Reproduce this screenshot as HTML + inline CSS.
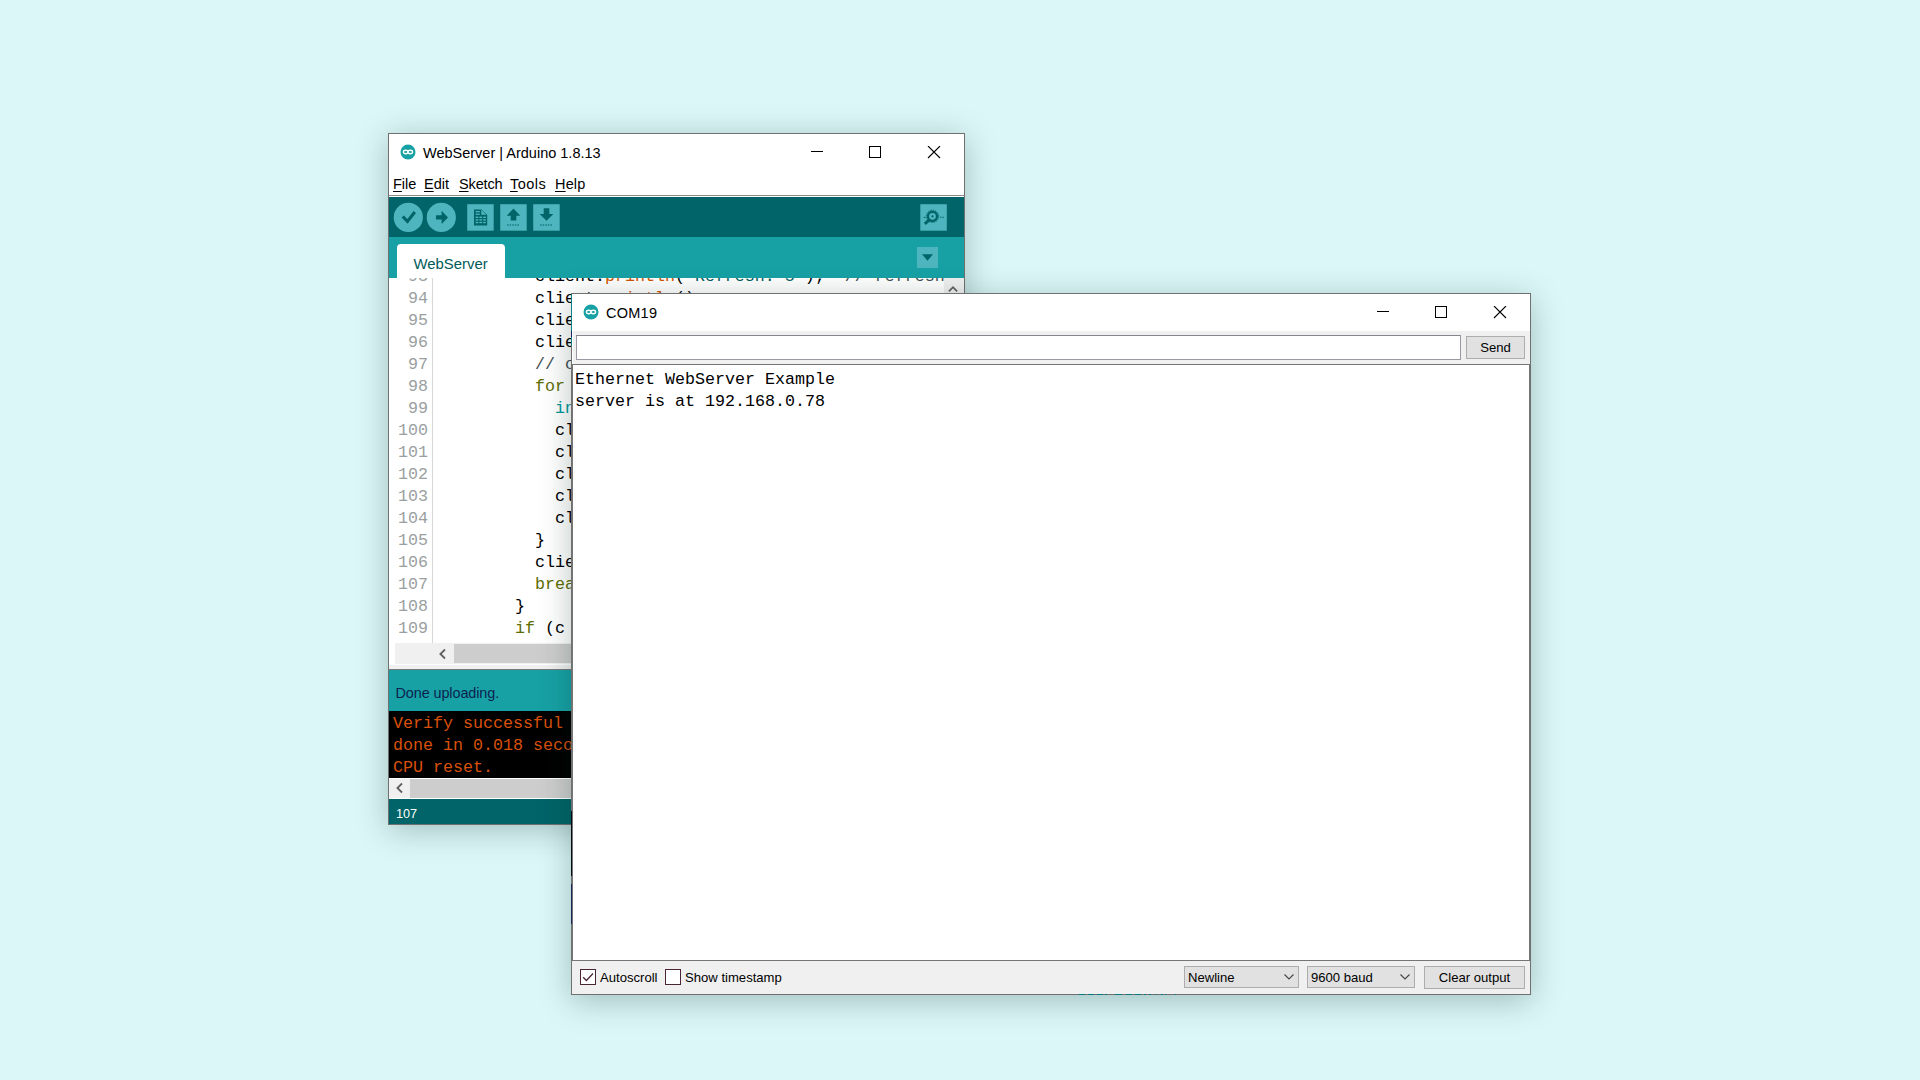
<!DOCTYPE html>
<html lang="en">
<head>
<meta charset="utf-8">
<title>Arduino Serial Monitor</title>
<style>
*{box-sizing:border-box;margin:0;padding:0}
html,body{width:1920px;height:1080px;overflow:hidden;background:#dcf7f8}
body{position:relative;font-family:"Liberation Sans",sans-serif;color:#000}
.abs{position:absolute}
.win{position:absolute;background:#fff;border:1px solid #707070}
/* ---------- Arduino IDE window ---------- */
#ide{left:388px;top:133px;width:577px;height:692px;box-shadow:0 5px 30px rgba(5,40,35,.27)}
#ide .inner{position:absolute;left:0;top:0;width:575px;height:690px;overflow:hidden}
.ttl{position:absolute;font-size:14.5px;line-height:20px;white-space:nowrap;color:#000}
.menu span{position:absolute;top:40px;font-size:14.5px;line-height:20px;white-space:nowrap}
.menu u{text-decoration:underline;text-underline-offset:1.5px;text-decoration-thickness:1px}
.mono{font-family:"Liberation Mono",monospace;font-size:16.67px;line-height:22px;white-space:pre}
.ln{color:#9aa0a0}
.k3{color:#5e6d03}.fn{color:#d35400}.dt{color:#00979c}.st{color:#005c5f}.cm{color:#434f54}
/* ---------- Serial monitor window ---------- */
#com{left:571px;top:293px;width:960px;height:702px;box-shadow:0 6px 30px rgba(5,40,35,.27)}
#com .inner{position:absolute;left:0;top:0;width:958px;height:700px;overflow:hidden}
.ui{font-size:13.1px;line-height:16px;white-space:nowrap;color:#000}
.btn{position:absolute;background:#e1e1e1;border:1px solid #adadad;text-align:center}
</style>
</head>
<body>

<!-- ======================= Arduino IDE ======================= -->
<div class="win" id="ide">
 <div class="inner">
  <!-- title bar -->
  <svg class="abs" style="left:11px;top:10px" width="16" height="16" viewBox="0 0 16 16">
   <circle cx="8" cy="8" r="7.5" fill="#17a1a5"/>
   <path d="M3.4 8a2.3 1.75 0 1 1 4.6 0a2.3 1.75 0 1 0 4.6 0a2.3 1.75 0 1 0 -4.6 0a2.3 1.75 0 1 1 -4.6 0z" fill="none" stroke="#fff" stroke-width="1.3"/>
  </svg>
  <div class="ttl" style="left:34px;top:9px">WebServer | Arduino 1.8.13</div>
  <svg class="abs" style="left:421px;top:12px" width="140" height="14" viewBox="0 0 140 14">
   <path d="M1 5.5h12" stroke="#000" stroke-width="1" fill="none"/>
   <rect x="59.5" y="0.5" width="11" height="11" stroke="#000" stroke-width="1" fill="none"/>
   <path d="M118 0l12 12M130 0l-12 12" stroke="#000" stroke-width="1.1" fill="none"/>
  </svg>
  <!-- menu bar -->
  <div class="menu">
   <span style="left:4px"><u>F</u>ile</span>
   <span style="left:35px"><u>E</u>dit</span>
   <span style="left:70px;letter-spacing:-0.15px"><u>S</u>ketch</span>
   <span style="left:121px;letter-spacing:0.45px"><u>T</u>ools</span>
   <span style="left:166px;letter-spacing:0.15px"><u>H</u>elp</span>
  </div>
  <div class="abs" style="left:0;top:61px;width:575px;height:1px;background:#8a8a8a"></div>
  <!-- toolbar -->
  <div class="abs" id="tb" style="left:0;top:63px;width:575px;height:40px;background:#006468">
   <svg class="abs" style="left:0;top:0" width="575" height="40" viewBox="0 0 575 40">
    <g fill="#4eb4be">
     <circle cx="19.3" cy="20.4" r="14.6"/>
     <circle cx="52.3" cy="20.4" r="14.6"/>
     <rect x="78.2" y="7.2" width="26.5" height="26.5"/>
     <rect x="111.2" y="7.2" width="26.5" height="26.5"/>
     <rect x="144.2" y="7.2" width="26.5" height="26.5"/>
     <rect x="531.3" y="7.2" width="26.5" height="26.5"/>
    </g>
    <g fill="#006468" stroke="none">
     <!-- verify check -->
     <path d="M12.6 20.6l2.2-2.2 3.6 3.6 6.2-8 2.4 1.9-8.4 10.9z"/>
     <!-- upload arrow -->
     <path d="M47 18.3h5.6v-4.6l6.4 6.7-6.4 6.7v-4.6H47z"/>
     <!-- new: document -->
     <path d="M85 12.4h7.5l5.7 5.7V28.6H85z"/>
     <!-- open: up arrow -->
     <path d="M124.5 11.5l6.8 7.2h-4v4.8h-5.6v-4.8h-4z"/>
     <!-- save: down arrow -->
     <path d="M154.7 11.3h5.6v5.7h4l-6.8 6.8-6.8-6.8h4z"/>
    </g>
    <!-- document grid -->
    <g fill="#4eb4be">
     <path d="M92.3 12.8v5h5z" fill="#4eb4be"/>
     <rect x="86.6" y="14" width="4.2" height="1.3"/><rect x="86.6" y="16.6" width="4.2" height="1.3"/>
     <rect x="86.6" y="19.6" width="2.8" height="1.4"/><rect x="90.4" y="19.6" width="2.8" height="1.4"/><rect x="94.2" y="19.6" width="2.6" height="1.4"/>
     <rect x="86.6" y="22.2" width="2.8" height="1.4"/><rect x="90.4" y="22.2" width="2.8" height="1.4"/><rect x="94.2" y="22.2" width="2.6" height="1.4"/>
     <rect x="86.6" y="24.8" width="2.8" height="1.4"/><rect x="90.4" y="24.8" width="2.8" height="1.4"/><rect x="94.2" y="24.8" width="2.6" height="1.4"/>
    </g>
    <!-- dotted lines under arrows -->
    <path d="M118 28h13" stroke="#006468" stroke-width="1.2" stroke-dasharray="1.6 1" fill="none"/>
    <path d="M151 28h13" stroke="#006468" stroke-width="1.2" stroke-dasharray="1.6 1" fill="none"/>
    <!-- serial monitor magnifier -->
    <g fill="none" stroke="#006468">
     <circle cx="543.5" cy="19.3" r="4.6" stroke-width="2.4"/>
     <circle cx="543.5" cy="19.3" r="6.2" stroke-width="1" stroke-dasharray="1.2 1.2"/>
     <path d="M540 23.2l-4.2 3.6" stroke-width="3"/>
     <path d="M534.6 20.3h2M551 20.3h1.4M553.4 20.3h1.4" stroke-width="1"/>
    </g>
    <circle cx="543.5" cy="19.3" r="1.1" fill="#006468"/>
   </svg>
  </div>
  <!-- tab bar -->
  <div class="abs" id="tabs" style="left:0;top:103px;width:575px;height:41px;background:#17a1a5">
   <div class="abs" style="left:8px;top:7px;width:108px;height:34px;background:#fff;border-radius:4px 4px 0 0"></div>
   <div class="abs" style="left:24.5px;top:17px;font-size:14.9px;line-height:20px;color:#005b5b;white-space:nowrap">WebServer</div>
   <div class="abs" style="left:528px;top:10px;width:21px;height:21px;background:#4eb4be"></div>
   <svg class="abs" style="left:528px;top:10px" width="21" height="21" viewBox="0 0 21 21"><path d="M5 7.3h11l-5.5 6.4z" fill="#006468"/></svg>
  </div>
  <!-- editor -->
  <div class="abs" id="ed" style="left:0;top:144px;width:575px;height:366px;background:#fff;overflow:hidden">
   <div class="abs" style="left:43px;top:0;width:1px;height:366px;background:#d8d8d8"></div>
   <pre class="abs mono ln" style="left:9px;top:-12.5px"> 93
 94
 95
 96
 97
 98
 99
100
101
102
103
104
105
106
107
108
109</pre>
   <pre class="abs mono" style="left:46px;top:-12.5px;color:#000">          client.<span class="fn">println</span>(<span class="st">"Refresh: 5"</span>);  <span class="cm">// refresh the page automatically every 5 sec</span>
          client.<span class="fn">println</span>();
          client.<span class="fn">println</span>(<span class="st">"&lt;!DOCTYPE HTML&gt;"</span>);
          client.<span class="fn">println</span>(<span class="st">"&lt;html&gt;"</span>);
          <span class="cm">// output the value of each analog input pin</span>
          <span class="k3">for</span> (<span class="dt">int</span> analogChannel = 0; analogChannel &lt; 6; analogChannel++) {
            <span class="dt">int</span> sensorReading = <span class="fn">analogRead</span>(analogChannel);
            client.<span class="fn">print</span>(<span class="st">"analog input "</span>);
            client.<span class="fn">print</span>(analogChannel);
            client.<span class="fn">print</span>(<span class="st">" is "</span>);
            client.<span class="fn">print</span>(sensorReading);
            client.<span class="fn">println</span>(<span class="st">"&lt;br /&gt;"</span>);
          }
          client.<span class="fn">println</span>(<span class="st">"&lt;/html&gt;"</span>);
          <span class="k3">break</span>;
        }
        <span class="k3">if</span> (c == <span class="st">'\n'</span>) {</pre>
   <!-- vertical scrollbar -->
   <div class="abs" style="left:555px;top:0;width:20px;height:366px;background:#f0f0f0"></div>
   <svg class="abs" style="left:555.4px;top:3.6px" width="18" height="14" viewBox="0 0 18 14"><path d="M4.9 9.3l4.1-4.1 4.1 4.1" fill="none" stroke="#606060" stroke-width="1.8"/></svg>
  </div>
  <!-- editor horizontal scrollbar -->
  <div class="abs" style="left:0;top:509px;width:575px;height:27px;background:#fff"></div>
  <div class="abs" style="left:6px;top:509px;width:569px;height:21px;background:#f0f0f0"></div>
  <div class="abs" style="left:65px;top:510px;width:300px;height:19px;background:#cdcdcd"></div>
  <svg class="abs" style="left:46px;top:512px" width="14" height="16" viewBox="0 0 14 16"><path d="M10 3.5l-4.6 4.5 4.6 4.5" fill="none" stroke="#606060" stroke-width="1.8"/></svg>
  <div class="abs" style="left:0;top:531px;width:575px;height:4px;background:#f0f0f0"></div>
  <div class="abs" style="left:0;top:535px;width:575px;height:1px;background:#7a7a7a"></div>
  <!-- status / console -->
  <div class="abs" id="st" style="left:0;top:536px;width:575px;height:41px;background:#17a1a5">
   <div class="abs" style="left:6.5px;top:13px;font-size:14.4px;line-height:20px;letter-spacing:-0.08px;color:#0c2350;white-space:nowrap">Done uploading.</div>
  </div>
  <div class="abs" id="con" style="left:0;top:577px;width:575px;height:67px;background:#000;overflow:hidden">
   <pre class="abs mono" style="left:4px;top:1.5px;color:#d9500a">Verify successful
done in 0.018 seconds
CPU reset.</pre>
  </div>
  <!-- console horizontal scrollbar -->
  <div class="abs" style="left:0;top:644px;width:575px;height:21px;background:#fff"></div>
  <div class="abs" style="left:0;top:645px;width:575px;height:19px;background:#f0f0f0"></div>
  <div class="abs" style="left:21px;top:645px;width:400px;height:19px;background:#cdcdcd"></div>
  <svg class="abs" style="left:3px;top:646px" width="14" height="16" viewBox="0 0 14 16"><path d="M10 3.5l-4.6 4.5 4.6 4.5" fill="none" stroke="#606060" stroke-width="1.8"/></svg>
  <div class="abs" id="ls" style="left:0;top:665px;width:575px;height:25px;background:#006468">
   <div class="abs" style="left:7px;top:7px;font-size:12.7px;line-height:16px;color:#fff;white-space:nowrap">107</div>
  </div>
 </div>
</div>

<!-- ======================= Serial Monitor ======================= -->
<div class="win" id="com">
 <div class="inner">
  <!-- title bar -->
  <svg class="abs" style="left:11px;top:10px" width="16" height="16" viewBox="0 0 16 16">
   <circle cx="8" cy="8" r="7.5" fill="#17a1a5"/>
   <path d="M3.4 8a2.3 1.75 0 1 1 4.6 0a2.3 1.75 0 1 0 4.6 0a2.3 1.75 0 1 0 -4.6 0a2.3 1.75 0 1 1 -4.6 0z" fill="none" stroke="#fff" stroke-width="1.3"/>
  </svg>
  <div class="ttl" style="left:34px;top:9px;letter-spacing:0.25px">COM19</div>
  <svg class="abs" style="left:804px;top:12px" width="140" height="14" viewBox="0 0 140 14">
   <path d="M1 5.5h12" stroke="#000" stroke-width="1" fill="none"/>
   <rect x="59.5" y="0.5" width="11" height="11" stroke="#000" stroke-width="1" fill="none"/>
   <path d="M118 0l12 12M130 0l-12 12" stroke="#000" stroke-width="1.1" fill="none"/>
  </svg>
  <!-- input row -->
  <div class="abs" style="left:1px;top:37px;width:957px;height:34px;background:#f0f0f0"></div>
  <div class="abs" style="left:4px;top:41px;width:885px;height:25px;background:#fff;border:1px solid #9a9aa2;border-top-color:#85858d"></div>
  <div class="btn ui" style="left:894px;top:42px;width:59px;height:23px;line-height:21px">Send</div>
  <!-- output text area -->
  <div class="abs" style="left:0;top:70px;width:958px;height:597px;background:#fff;border:1px solid #767676;border-right-width:1px"></div>
  <pre class="abs mono" style="left:3px;top:75px;color:#000">Ethernet WebServer Example
server is at 192.168.0.78</pre>
  <!-- bottom row -->
  <div class="abs" style="left:0;top:667px;width:958px;height:33px;background:#f0f0f0"></div>
  <div class="abs" style="left:8px;top:675px;width:16px;height:16px;background:#fff;border:1px solid #4a2536"></div>
  <svg class="abs" style="left:8px;top:675px" width="16" height="16" viewBox="0 0 16 16"><path d="M3.2 8.2l3.2 3.3 6.6-7" fill="none" stroke="#4a2536" stroke-width="1.3"/></svg>
  <div class="abs ui" style="left:28px;top:676px">Autoscroll</div>
  <div class="abs" style="left:93px;top:675px;width:16px;height:16px;background:#fff;border:1px solid #4a2536"></div>
  <div class="abs ui" style="left:113px;top:676px">Show timestamp</div>
  <div class="btn ui" style="left:612px;top:672px;width:115px;height:22px;line-height:20px;text-align:left;padding:1px 0 0 3px">Newline</div>
  <svg class="abs" style="left:711px;top:679px" width="12" height="8" viewBox="0 0 12 8"><path d="M1.5 1.5l4.5 4.5 4.5-4.5" fill="none" stroke="#444" stroke-width="1.1"/></svg>
  <div class="btn ui" style="left:735px;top:672px;width:108px;height:22px;line-height:20px;text-align:left;padding:1px 0 0 3px">9600 baud</div>
  <svg class="abs" style="left:827px;top:679px" width="12" height="8" viewBox="0 0 12 8"><path d="M1.5 1.5l4.5 4.5 4.5-4.5" fill="none" stroke="#444" stroke-width="1.1"/></svg>
  <div class="btn ui" style="left:852px;top:672px;width:101px;height:23px;line-height:21px">Clear output</div>
 </div>
<div class="abs" style="left:-1px;top:0;width:1px;height:37px;background:#0f7f86"></div>
 <div class="abs" style="left:-1px;top:37px;width:1px;height:6px;background:#1a2460"></div>
 <div class="abs" style="left:-1px;top:43px;width:1px;height:9px;background:#0f7f86"></div>
 <div class="abs" style="left:-1px;top:517px;width:1px;height:65px;background:#08080f"></div>
 <div class="abs" style="left:-1px;top:590px;width:1px;height:40px;background:#1d2455"></div>
 <svg class="abs" style="left:506px;top:700px" width="102" height="1" viewBox="0 0 102 1"><path d="M1 .5h6M10 .5h6M19 .5h6M27 .5h2M37 .5h7M48 .5h6M57 .5h6M66 .5h2M71 .5h2M77 .5h1M83 .5h2M87 .5h1M97 .5h1" stroke="#007a80" stroke-width="1" fill="none"/></svg>
</div>

</body>
</html>
